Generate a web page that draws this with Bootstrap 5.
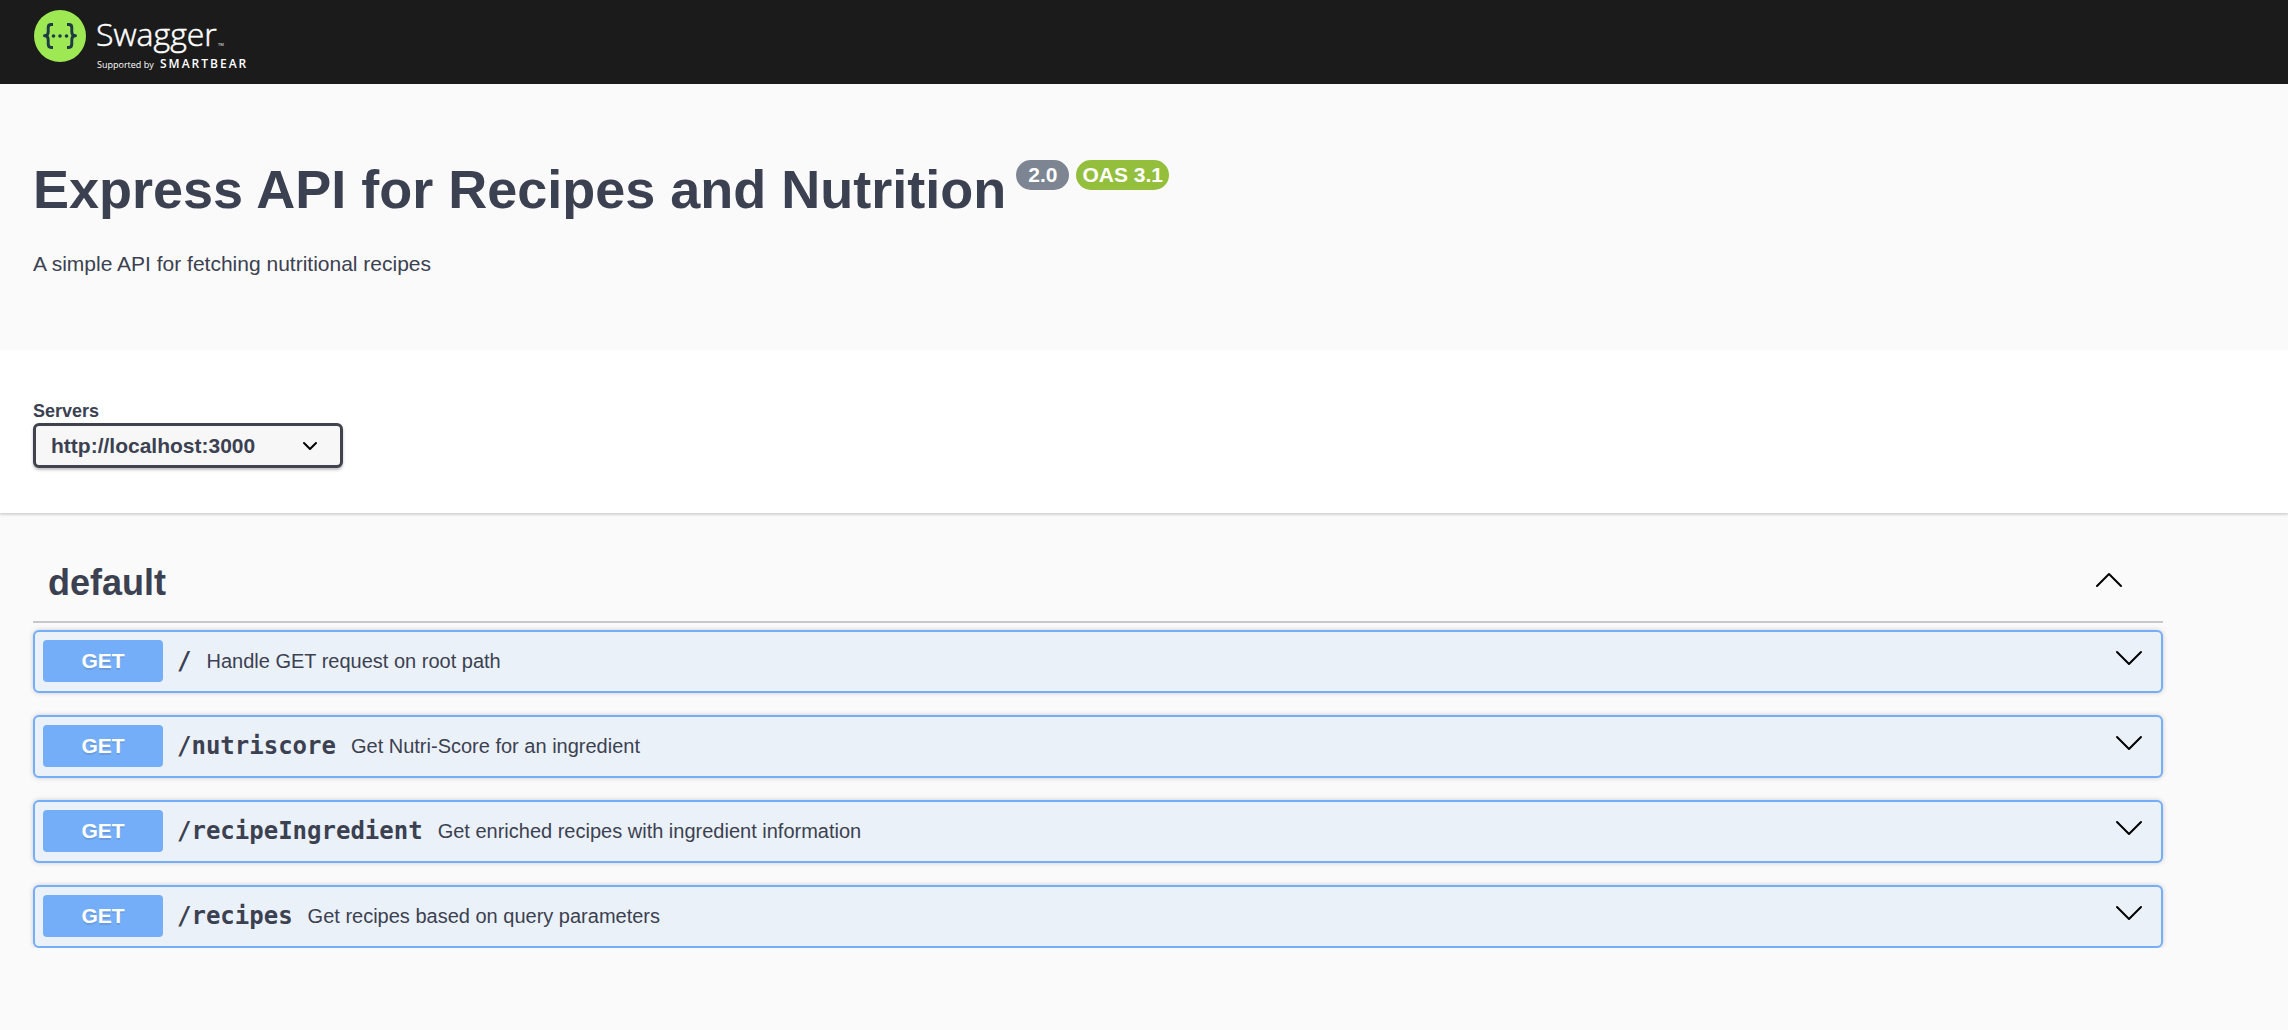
<!DOCTYPE html>
<html lang="en">
<head>
<meta charset="utf-8">
<meta name="viewport" content="width=device-width, initial-scale=1">
<title>Express API for Recipes and Nutrition</title>
<link href="https://cdn.jsdelivr.net/npm/bootstrap@5.3.0/dist/css/bootstrap.min.css" rel="stylesheet">
<style>
  :root { --ink: #3b4151; --get: #74adf8; }
  body { font-family: "Liberation Sans", Arial, sans-serif; color: var(--ink); background: #fafafa; }
  .topbar { background: #1b1b1b; height: 84px; }
  .wrap { max-width: 2163px; padding-left: 33px; }
  .api-info { padding-top: 74px; padding-bottom: 74px; }
  .api-title { font-size: 54px; line-height: 62px; font-weight: 700; }
  .pills { gap: 7px; padding: 2px 0 0 10px; }
  .pill { font-size: 21px; line-height: 30px; font-weight: 700; border-radius: 57px; color: #fff; }
  .pill-version { background: #7d8492; padding: 0 12px; }
  .pill-oas { background: #93bf3c; padding: 0 6px; }
  .api-desc { font-size: 21px; line-height: 24px; margin-top: 32px; }
  .scheme { background: #fff; padding: 50px 0 45px; box-shadow: 0 2px 2px rgba(0,0,0,.15); }
  .scheme label { font-size: 18px; line-height: 22px; font-weight: 700; padding-bottom: 1px; }
  .server-select {
    width: 310px; height: 45px; padding: 0 60px 0 15px; border: 3px solid #41444e; border-radius: 6px;
    color: var(--ink); font-size: 21px; font-weight: 700; line-height: 36px;
    background: #f7f7f7 url("data:image/svg+xml,%3Csvg xmlns='http://www.w3.org/2000/svg' viewBox='0 0 16 10'%3E%3Cpath d='M2 2l6 6 6-6' fill='none' stroke='%23000' stroke-width='2' stroke-linecap='round' stroke-linejoin='round'/%3E%3C/svg%3E") no-repeat right 22px center / 16px 10px;
    box-shadow: 0 2px 3px rgba(0,0,0,.25);
  }
  .tag-head { height: 78px; margin-top: 32px; padding: 0 40px 0 15px; color: var(--ink); border-bottom: 2px solid #c6c7cc; }
  .tag-head h2 { font-size: 36px; line-height: 44px; font-weight: 700; }
  .ops { padding-top: 7px; gap: 22px; }
  .op { height: 63px; padding: 0 18px 1px 8px; color: var(--ink); background: #ebf1f9; border: 2px solid var(--get); border-radius: 6px; box-shadow: 0 0 5px rgba(0,0,0,.19); }
  .verb { width: 120px; line-height: 42px; font-size: 21px; font-weight: 700; color: #fff; background: var(--get); border-radius: 4px; text-shadow: 0 2px 0 rgba(0,0,0,.1); }
  .op-path { font-family: "DejaVu Sans Mono", monospace; font-size: 24px; line-height: 30px; font-weight: 700; margin-left: 14px; }
  .op-text { font-size: 20px; line-height: 24px; margin-left: 15px; }
  .chev { width: 28px; height: 16px; margin-bottom: 6px; fill: none; stroke: #000; stroke-width: 2; stroke-linecap: round; stroke-linejoin: round; }
  .brand-main { font: 300 32px "Open Sans", sans-serif; stroke: #fff; stroke-width: .5px; }
  .brand-tm { font: 400 4px "Open Sans", sans-serif; }
  .brand-sub { font: 400 9px "Open Sans", sans-serif; }
  .brand-owner { font: 600 12px "Open Sans", sans-serif; letter-spacing: 2px; }
</style>
</head>
<body>
<header class="topbar">
  <div class="wrap">
    <a href="#" class="d-inline-block" aria-label="Swagger">
      <svg class="d-block" width="220" height="84" viewBox="0 0 220 84" fill="#fff">
        <circle cx="27" cy="36" r="26" fill="#9ee854"/>
        <g fill="none" stroke="#1d3a46" stroke-width="2.9" stroke-linejoin="round">
          <path d="M20 24.500h-1.800q-3 0-3 3v4.500q0 3.800-3.700 3.800q3.700 0 3.700 3.800v4.500q0 3.400 3 3.400h1.800"/>
          <path d="M34 24.500h1.800q3 0 3 3v4.500q0 3.800 3.700 3.800q-3.700 0-3.700 3.800v4.500q0 3.400-3 3.400h-1.800"/>
        </g>
        <g fill="#1d3a46"><circle cx="20.500" cy="36" r="1.800"/><circle cx="27" cy="36" r="1.800"/><circle cx="33.500" cy="36" r="1.800"/></g>
        <text class="brand-main" x="63" y="46">Swagger</text>
        <text class="brand-tm" x="185" y="46">TM</text>
        <text class="brand-sub" x="64" y="68">Supported by</text>
        <text class="brand-owner" x="127" y="68">SMARTBEAR</text>
      </svg>
    </a>
  </div>
</header>

<main>
  <section class="api-info">
    <div class="wrap">
      <div class="d-flex align-items-start">
        <h1 class="api-title mb-0">Express API for Recipes and Nutrition</h1>
        <div class="pills d-flex">
          <span class="pill pill-version">2.0</span>
          <span class="pill pill-oas">OAS 3.1</span>
        </div>
      </div>
      <p class="api-desc mb-0">A simple API for fetching nutritional recipes</p>
    </div>
  </section>

  <section class="scheme">
    <div class="wrap">
      <label class="d-block" for="servers">Servers</label>
      <select id="servers" class="form-select server-select">
        <option>http://localhost:3000</option>
      </select>
    </div>
  </section>

  <section class="wrap">
    <button type="button" class="tag-head btn rounded-0 border-top-0 border-start-0 border-end-0 w-100 d-flex align-items-center justify-content-between" aria-expanded="true">
      <h2 class="mb-0">default</h2>
      <svg class="chev" viewBox="0 0 28 16"><path d="M2 14 14 2l12 12"/></svg>
    </button>
    <div class="ops d-flex flex-column">
      <button type="button" class="op btn d-flex align-items-center w-100">
        <span class="verb">GET</span><span class="op-path">/</span><span class="op-text">Handle GET request on root path</span>
        <svg class="chev ms-auto" viewBox="0 0 28 16"><path d="m2 2 12 12L26 2"/></svg>
      </button>
      <button type="button" class="op btn d-flex align-items-center w-100">
        <span class="verb">GET</span><span class="op-path">/nutriscore</span><span class="op-text">Get Nutri-Score for an ingredient</span>
        <svg class="chev ms-auto" viewBox="0 0 28 16"><path d="m2 2 12 12L26 2"/></svg>
      </button>
      <button type="button" class="op btn d-flex align-items-center w-100">
        <span class="verb">GET</span><span class="op-path">/recipeIngredient</span><span class="op-text">Get enriched recipes with ingredient information</span>
        <svg class="chev ms-auto" viewBox="0 0 28 16"><path d="m2 2 12 12L26 2"/></svg>
      </button>
      <button type="button" class="op btn d-flex align-items-center w-100">
        <span class="verb">GET</span><span class="op-path">/recipes</span><span class="op-text">Get recipes based on query parameters</span>
        <svg class="chev ms-auto" viewBox="0 0 28 16"><path d="m2 2 12 12L26 2"/></svg>
      </button>
    </div>
  </section>
</main>
<script src="https://cdn.jsdelivr.net/npm/bootstrap@5.3.0/dist/js/bootstrap.bundle.min.js"></script>
</body>
</html>
